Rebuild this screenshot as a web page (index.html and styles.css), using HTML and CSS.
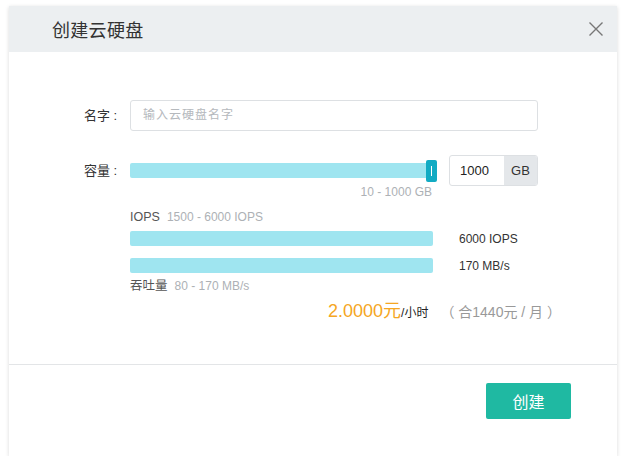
FILE: index.html
```html
<!DOCTYPE html>
<html>
<head>
<meta charset="utf-8">
<link rel="stylesheet" href="styles.css">
</head>
<body>
<div class="dialog">
  <div class="header">
    <span class="title">创建云硬盘</span>
    <svg class="close" width="16" height="16" viewBox="0 0 16 16"><path d="M1.5 1.5 L14.5 14.5 M14.5 1.5 L1.5 14.5" stroke="#777" stroke-width="1.4" fill="none"/></svg>
  </div>
  <div class="body">
    <div class="row name-row">
      <label class="lbl">名字 :</label>
      <div class="text-input">输入云硬盘名字</div>
    </div>
    <div class="row cap-row">
      <label class="lbl">容量 :</label>
      <div class="slider-col">
        <div class="slider">
          <div class="track"></div>
          <div class="handle"><span></span></div>
        </div>
        <div class="range">10 - 1000 GB</div>
      </div>
      <div class="num-input">
        <span class="num">1000</span>
        <span class="unit">GB</span>
      </div>
    </div>
    <div class="perf">
      <div class="perf-head"><span class="perf-name">IOPS</span><span class="perf-range">1500 - 6000 IOPS</span></div>
      <div class="perf-bar-row"><div class="bar"></div><span class="bar-val">6000 IOPS</span></div>
      <div class="perf-bar-row second"><div class="bar"></div><span class="bar-val">170 MB/s</span></div>
      <div class="perf-head"><span class="perf-name">吞吐量</span><span class="perf-range">80 - 170 MB/s</span></div>
    </div>
    <div class="price">
      <span class="amount">2.0000元</span><span class="per">/小时</span><span class="month">（ 合1440元 / 月 ）</span>
    </div>
  </div>
  <div class="footer">
    <button class="btn">创建</button>
  </div>
</div>
</body>
</html>
```
FILE: styles.css
```css
html, body {
  margin: 0;
  padding: 0;
  background: #fff;
}
body {
  padding: 6px 9px 0 9px;
  font-family: "Liberation Sans", "Noto Sans CJK SC", sans-serif;
  color: #333;
}
.dialog {
  width: 608px;
  height: 450px;
  background: #fff;
  box-shadow: 0 1px 4px rgba(0,0,0,0.15);
  display: flex;
  flex-direction: column;
}
.header {
  height: 46px;
  background: #eceff1;
  display: flex;
  align-items: center;
  justify-content: space-between;
  padding: 0 13px 0 43px;
}
.title {
  font-size: 18px;
  color: #333;
  letter-spacing: 0.3px;
}
.close {
  display: block;
}
.body {
  height: 313px;
  border-bottom: 1px solid #e3e5e7;
  padding: 48px 0 0 75px;
  box-sizing: border-box;
}
.row {
  display: flex;
  align-items: flex-start;
}
.lbl {
  width: 46px;
  font-size: 13px;
  color: #333;
  line-height: 31px;
}
.text-input {
  width: 408px;
  height: 31px;
  box-sizing: border-box;
  border: 1px solid #dde0e3;
  border-radius: 3px;
  font-size: 12px;
  color: #b5b9bd;
  line-height: 29px;
  padding-left: 12px;
  letter-spacing: 1px;
}
.cap-row {
  margin-top: 24px;
}
.slider-col {
  width: 307px;
}
.slider {
  position: relative;
  height: 31px;
  display: flex;
  align-items: center;
}
.track {
  width: 300px;
  height: 15px;
  background: #9fe5f0;
  border-radius: 2px;
}
.handle {
  position: absolute;
  left: 296px;
  top: 5px;
  width: 11px;
  height: 22px;
  background: #12abc3;
  border-radius: 2px;
  display: flex;
  align-items: center;
  justify-content: center;
}
.handle span {
  width: 1px;
  height: 10px;
  background: #fff;
}
.range {
  text-align: right;
  font-size: 12px;
  color: #adb1b5;
  margin-top: -1px;
  padding-right: 5px;
}
.num-input {
  margin-left: 12px;
  width: 89px;
  height: 31px;
  box-sizing: border-box;
  border: 1px solid #dde0e3;
  border-radius: 3px;
  display: flex;
  overflow: hidden;
}
.num {
  flex: 1;
  font-size: 13px;
  line-height: 29px;
  padding-left: 10px;
  color: #222;
}
.unit {
  width: 33px;
  background: #e4e7ea;
  font-size: 13px;
  line-height: 29px;
  text-align: center;
  color: #333;
}
.perf {
  margin-left: 46px;
  margin-top: 10px;
}
.perf-head {
  font-size: 12px;
  line-height: 16px;
}
.perf-name {
  color: #555;
  font-size: 12.5px;
  margin-right: 7px;
}
.perf-range {
  color: #adb1b5;
}
.perf-bar-row {
  display: flex;
  align-items: center;
  margin-top: 6px;
  height: 15px;
}
.perf-bar-row.second {
  margin-top: 12px;
  margin-bottom: 5px;
}
.bar {
  width: 303px;
  height: 15px;
  background: #9fe5f0;
  border-radius: 2px;
}
.bar-val {
  margin-left: 26px;
  font-size: 12px;
  color: #333;
}
.price {
  margin-left: 244px;
  margin-top: 2px;
  display: flex;
  align-items: baseline;
}
.amount {
  font-size: 18px;
  color: #f5a623;
}
.per {
  font-size: 12px;
  color: #222;
}
.month {
  font-size: 14px;
  color: #999;
  margin-left: 12px;
}
.footer {
  flex: 1;
  display: flex;
  justify-content: flex-end;
  align-items: flex-start;
  padding: 18px 46px 0 0;
}
.btn {
  width: 85px;
  height: 36px;
  background: #1fb9a2;
  border: none;
  border-radius: 2px;
  color: #fff;
  font-size: 16px;
  font-family: "Noto Sans CJK SC", sans-serif;
}
```
